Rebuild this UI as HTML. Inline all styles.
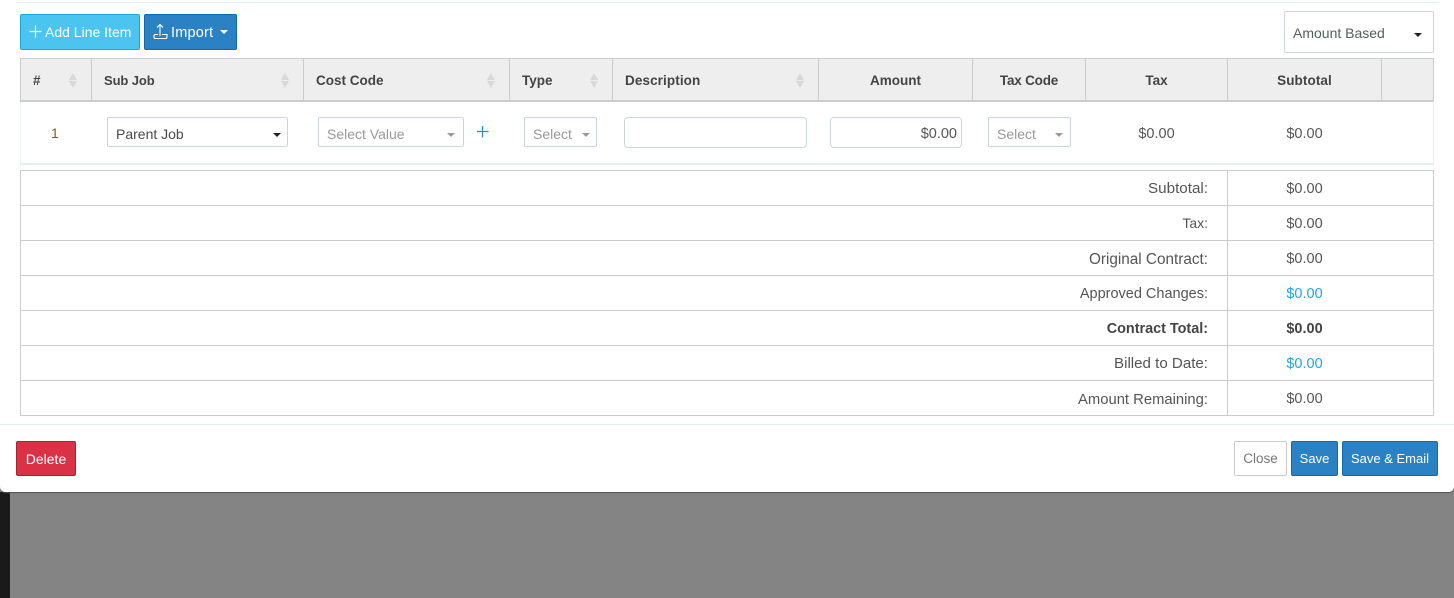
<!DOCTYPE html>
<html><head><meta charset="utf-8">
<style>
html,body{margin:0;padding:0;width:1454px;height:598px;overflow:hidden;background:#848484;font-family:"Liberation Sans",sans-serif;font-size:14px;color:#555}
div,span.a{position:absolute;box-sizing:border-box}
.t{white-space:nowrap;line-height:20px;height:20px}
.h{font-weight:bold;color:#444;font-size:13.5px;top:71px}
.c{text-align:center}
.r{text-align:right}
.v{background:#ccc;width:1px;top:58px;height:44px}
.ln{background:#ccc;height:1px;left:20px;width:1414px}
.inp{background:#fff;border:1px solid #ccd5df;border-radius:2px}
.ph{color:#999}
.caret{width:0;height:0;border-left:4px solid transparent;border-right:4px solid transparent;border-top:4px solid #222}
.caretg{border-top-color:#999}
.btn{border-radius:2px;color:#fff;text-align:center;line-height:35px;height:35px;top:441px;font-size:13px}
.sort{width:8px;height:16px}
.sort:before{content:"";position:absolute;left:0;top:0;border-left:4px solid transparent;border-right:4px solid transparent;border-bottom:7px solid #d8d8d8}
.sort:after{content:"";position:absolute;left:0;top:8px;border-left:4px solid transparent;border-right:4px solid transparent;border-top:7px solid #d8d8d8}
.l{right:246px;width:300px;text-align:right}
.m{left:1228px;width:153px;text-align:center;font-size:14.5px}
</style></head><body>
<div style="left:10px;top:492px;width:1444px;height:106px;background:#848484"></div>
<div style="left:0;top:492px;width:10px;height:106px;background:#1a1a1a"></div>
<div style="left:0;top:0;width:1454px;height:492px;background:#fff;border-radius:0 0 5px 5px;box-shadow:0 1px 1px #555"></div>
<div style="left:16px;top:2px;width:1422px;height:1px;background:#e5eff0"></div>

<div style="left:20px;top:14px;width:120px;height:36px;background:#4bc5f0;border:1px solid #1fa5d5;border-radius:2px"></div>
<svg style="position:absolute;left:29px;top:25px" width="13" height="13" viewBox="0 0 13 13"><path d="M6.5 0.5V12.5M0.5 6.5H12.5" stroke="#fff" stroke-width="1.2" fill="none"/></svg>
<div class="t" style="left:45px;top:22px;color:#fff;font-size:14px">Add Line Item</div>
<div style="left:144px;top:14px;width:93px;height:36px;background:#2a82c5;border:1px solid #0f6aab;border-radius:2px"></div>
<svg style="position:absolute;left:152px;top:23px" width="17" height="17" viewBox="0 0 17 17"><path d="M8 1.5V13M5 4.5L8 1.5L11 4.5M6 11.5H3.5Q2 11.5 2 13V14Q2 15.5 3.5 15.5H13.5Q15 15.5 15 14V11.5H10" stroke="#fff" stroke-width="1.1" fill="none"/></svg>
<div class="t" style="left:171px;top:23px;color:#fff;font-size:14.5px;letter-spacing:.2px">Import</div>
<div class="caret" style="left:220px;top:30px;border-top-color:#fff"></div>

<div class="inp" style="left:1284px;top:11px;width:150px;height:42px"></div>
<div class="t" style="left:1293px;top:23px;font-size:14px;color:#4f5f5c">Amount Based</div>
<div class="caret" style="left:1414px;top:33px"></div>

<div style="left:20px;top:58px;width:1414px;height:44px;background:#eee;border-top:1px solid #ccc;border-bottom:2px solid #ccc"></div>
<div class="v" style="left:20px"></div><div class="v" style="left:91px"></div><div class="v" style="left:303px"></div><div class="v" style="left:509px"></div><div class="v" style="left:612px"></div><div class="v" style="left:818px"></div><div class="v" style="left:972px"></div><div class="v" style="left:1085px"></div><div class="v" style="left:1227px"></div><div class="v" style="left:1381px"></div><div class="v" style="left:1433px"></div>

<div class="t h" style="left:33px">#</div><div class="sort" style="left:69px;top:73px"></div>
<div class="t h" style="left:104px;font-size:13px;letter-spacing:-.1px">Sub Job</div><div class="sort" style="left:281px;top:73px"></div>
<div class="t h" style="left:316px">Cost Code</div><div class="sort" style="left:487px;top:73px"></div>
<div class="t h" style="left:522px">Type</div><div class="sort" style="left:590px;top:73px"></div>
<div class="t h" style="left:625px;letter-spacing:.1px">Description</div><div class="sort" style="left:796px;top:73px"></div>
<div class="t h c" style="left:819px;width:153px">Amount</div>
<div class="t h c" style="left:973px;width:112px;letter-spacing:-.2px">Tax Code</div>
<div class="t h c" style="left:1086px;width:141px">Tax</div>
<div class="t h c" style="left:1228px;width:153px;letter-spacing:.1px">Subtotal</div>

<div style="left:20px;top:102px;width:1px;height:61px;background:#e8f0f2"></div>
<div style="left:1433px;top:102px;width:1px;height:61px;background:#e8f0f2"></div>
<div style="left:20px;top:163px;width:1414px;height:2px;background:#e5eff0"></div>

<div class="t" style="left:51px;top:123px;color:#8a5a1e;font-size:14px">1</div>
<div class="inp" style="left:107px;top:117px;width:181px;height:30px"></div>
<div class="t" style="left:116px;top:124px;color:#4a4a4a;font-size:14px">Parent Job</div>
<div class="caret" style="left:273px;top:133px"></div>
<div class="inp" style="left:318px;top:117px;width:146px;height:30px"></div>
<div class="t ph" style="left:327px;top:124px;font-size:14px">Select Value</div>
<div class="caret caretg" style="left:447px;top:133px"></div>
<svg style="position:absolute;left:477px;top:126px" width="12" height="12" viewBox="0 0 12 12"><path d="M5.5 0V11.5M0 5.5H11.5" stroke="#1a90e0" stroke-width="1.2" fill="none"/></svg>
<div class="inp" style="left:524px;top:117px;width:73px;height:30px"></div>
<div class="t ph" style="left:533px;top:124px;font-size:14px">Select</div>
<div class="caret caretg" style="left:582px;top:133px"></div>
<div class="inp" style="left:624px;top:117px;width:183px;height:31px;border-radius:4px"></div>
<div class="inp" style="left:830px;top:117px;width:132px;height:31px;border-radius:4px"></div>
<div class="t r" style="left:830px;width:127px;top:124px;font-size:14.5px">$0.00</div>
<div class="inp" style="left:988px;top:117px;width:83px;height:30px"></div>
<div class="t ph" style="left:997px;top:124px;font-size:14px">Select</div>
<div class="caret caretg" style="left:1055px;top:133px"></div>
<div class="t c" style="left:1086px;width:141px;top:124px;font-size:14.5px">$0.00</div>
<div class="t c" style="left:1228px;width:153px;top:124px;font-size:14.5px">$0.00</div>

<div class="ln" style="top:170px"></div><div class="ln" style="top:205px"></div><div class="ln" style="top:240px"></div><div class="ln" style="top:275px"></div><div class="ln" style="top:310px"></div><div class="ln" style="top:345px"></div><div class="ln" style="top:380px"></div><div class="ln" style="top:415px"></div>
<div style="left:20px;top:170px;width:1px;height:246px;background:#ccc"></div>
<div style="left:1227px;top:170px;width:1px;height:246px;background:#ccc"></div>
<div style="left:1433px;top:170px;width:1px;height:246px;background:#ccc"></div>

<div class="t l" style="top:179px;font-size:15.2px">Subtotal:</div><div class="t m" style="top:179px">$0.00</div>
<div class="t l" style="top:213px">Tax:</div><div class="t m" style="top:214px">$0.00</div>
<div class="t l" style="top:250px;font-size:15.3px">Original Contract:</div><div class="t m" style="top:249px">$0.00</div>
<div class="t l" style="top:284px;font-size:14.5px">Approved Changes:</div><div class="t m" style="top:284px;color:#1ea5ee">$0.00</div>
<div class="t l" style="top:319px;font-weight:bold;color:#444;font-size:14.4px">Contract Total:</div><div class="t m" style="top:319px;font-weight:bold;color:#444">$0.00</div>
<div class="t l" style="top:354px;font-size:15.1px">Billed to Date:</div><div class="t m" style="top:354px;color:#1ea5ee">$0.00</div>
<div class="t l" style="top:390px;font-size:14.8px">Amount Remaining:</div><div class="t m" style="top:389px">$0.00</div>

<div style="left:0;top:424px;width:1454px;height:1px;background:#e5eff0"></div>
<div class="btn" style="left:16px;width:60px;background:#d93145;border:1px solid #a82232;font-size:14px;line-height:34px">Delete</div>
<div class="btn" style="left:1234px;width:53px;background:#fff;border:1px solid #ccc;color:#777;font-size:13.5px;line-height:34px">Close</div>
<div class="btn" style="left:1291px;width:47px;background:#2a82c5;border:1px solid #0f6aab;line-height:34px">Save</div>
<div class="btn" style="left:1342px;width:96px;background:#2a82c5;border:1px solid #0f6aab;line-height:34px">Save &amp; Email</div>
</body></html>
